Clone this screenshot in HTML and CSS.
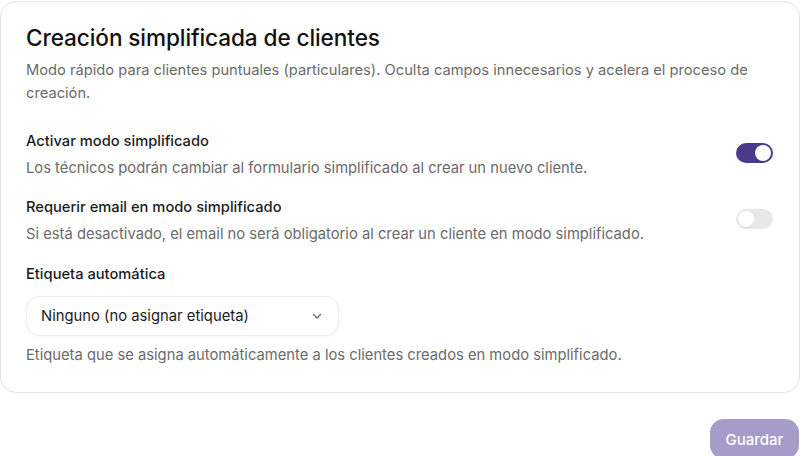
FILE: index.html
```html
<!DOCTYPE html>
<html lang="es">
<head>
<meta charset="utf-8">
<link rel="stylesheet" href="styles.css">
</head>
<body>
<div class="page">
  <section class="card">
    <h1 class="title">Creación simplificada de clientes</h1>
    <p class="subtitle">Modo rápido para clientes puntuales (particulares). Oculta campos innecesarios y acelera el proceso de creación.</p>

    <div class="rows">
      <div class="row">
        <div class="row-text">
          <div class="label">Activar modo simplificado</div>
          <div class="desc">Los técnicos podrán cambiar al formulario simplificado al crear un nuevo cliente.</div>
        </div>
        <span class="toggle on"><span class="knob"></span></span>
      </div>
      <div class="row">
        <div class="row-text">
          <div class="label">Requerir email en modo simplificado</div>
          <div class="desc">Si está desactivado, el email no será obligatorio al crear un cliente en modo simplificado.</div>
        </div>
        <span class="toggle off"><span class="knob"></span></span>
      </div>
    </div>

    <div class="field">
      <div class="label">Etiqueta automática</div>
      <div class="select">
        <span>Ninguno (no asignar etiqueta)</span>
        <svg class="chev" width="12" height="12" viewBox="0 0 12 12"><path d="M2.5 4.5 L6 8 L9.5 4.5" fill="none" stroke="#6b6b6b" stroke-width="1.3" stroke-linecap="round" stroke-linejoin="round"/></svg>
      </div>
      <div class="desc help">Etiqueta que se asigna automáticamente a los clientes creados en modo simplificado.</div>
    </div>
  </section>

  <div class="actions">
    <button class="save">Guardar</button>
  </div>
</div>
</body>
</html>
```

FILE: styles.css
```css
* { box-sizing: border-box; }
html, body { margin: 0; padding: 0; background: #fff; }
body {
  font-family: Inter, "Noto Sans", sans-serif;
  color: #1a1a1a;
  width: 800px;
  height: 456px;
  overflow: hidden;
}
.page { padding-top: 1px; }
.card {
  border: 1px solid #e6e6e6;
  border-radius: 16px;
  padding: 22px 26px 24px 25px;
  width: 800px;
  height: 392px;
}
.title {
  margin: 0;
  font-size: 22.6px;
  line-height: 28px;
  font-weight: 500;
  color: #111;
  letter-spacing: -0.1px;
}
.subtitle {
  margin: 7px 0 0 0;
  font-size: 14.7px;
  line-height: 23px;
  color: #6b6b6b;
}
.rows {
  margin-top: 25px;
  display: flex;
  flex-direction: column;
  gap: 16px;
}
.row {
  display: flex;
  align-items: center;
  justify-content: space-between;
}
.label {
  font-size: 14.7px;
  line-height: 23px;
  font-weight: 500;
  color: #1c1c1c;
}
.desc {
  margin-top: 4px;
  font-size: 14.75px;
  line-height: 23px;
  color: #6b6b6b;
}
.toggle {
  width: 37px;
  height: 20px;
  border-radius: 10px;
  padding: 2px;
  display: flex;
  margin-bottom: 4px;
}
.toggle.on { background: #4a3a8c; justify-content: flex-end; }
.toggle.off { background: #e8e8e8; justify-content: flex-start; }
.knob {
  width: 16px;
  height: 16px;
  border-radius: 50%;
  background: #fff;
  box-shadow: 0 1px 1px rgba(0,0,0,0.08);
}
.field { margin-top: 17px; }
.select {
  margin-top: 10px;
  width: 313px;
  height: 40px;
  border: 1px solid #ececec;
  border-radius: 13px;
  display: flex;
  align-items: center;
  justify-content: space-between;
  padding: 0 15px 0 14px;
  font-size: 14.8px;
  color: #1c1c1c;
  box-shadow: 0 1px 2px rgba(0,0,0,0.03);
}
.chev { display: block; }
.help { margin-top: 8px; }
.actions {
  display: flex;
  justify-content: flex-end;
  padding-top: 26px;
  padding-right: 1px;
}
.save {
  width: 89px;
  height: 40px;
  border: none;
  border-radius: 14px;
  background: #a59cc9;
  color: #fff;
  font-family: Inter, "Noto Sans", sans-serif;
  font-size: 15px;
  font-weight: 500;
}
```
